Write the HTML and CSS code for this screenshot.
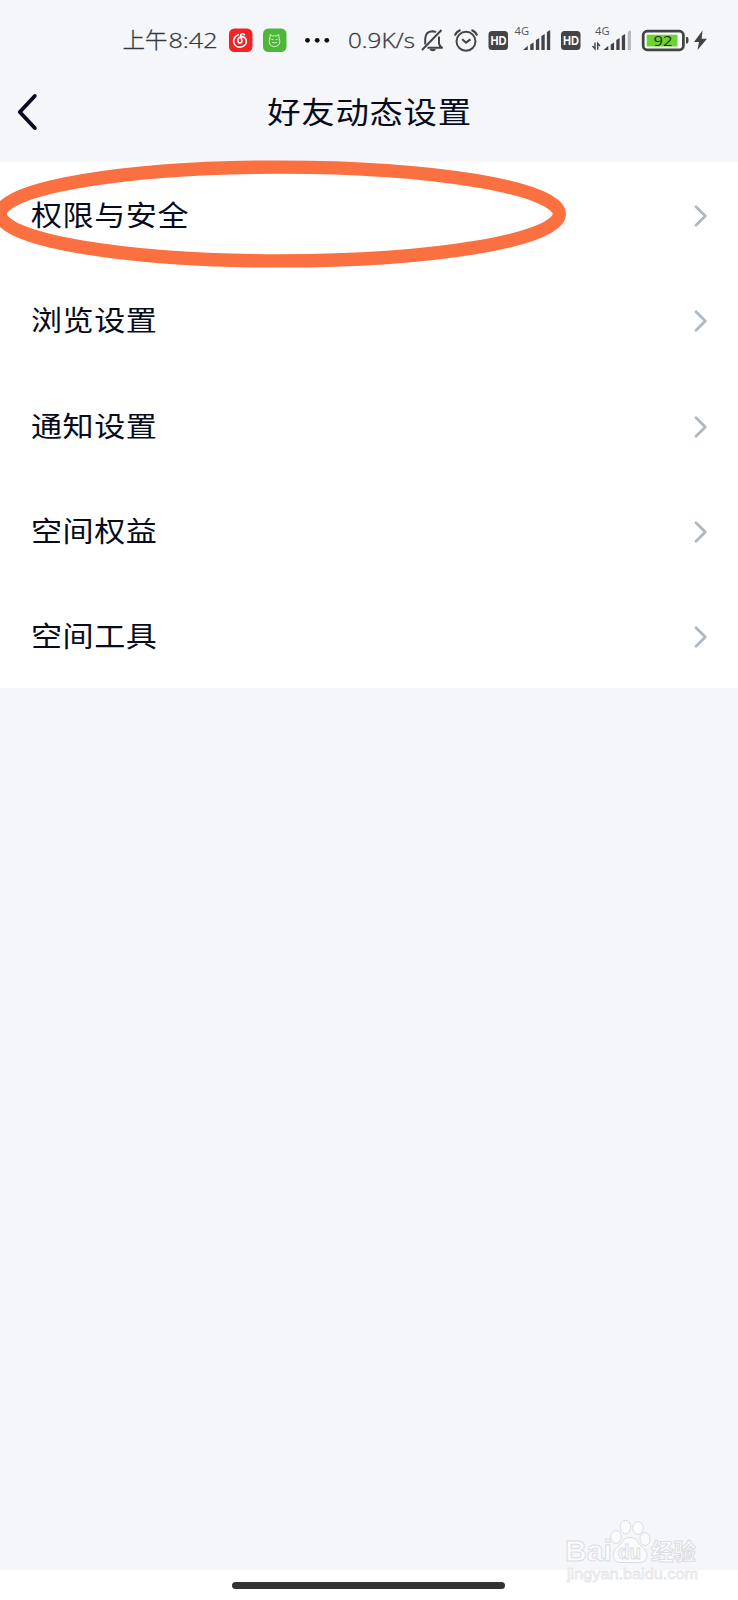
FILE: index.html
```html
<!DOCTYPE html>
<html lang="zh-CN">
<head>
<meta charset="utf-8">
<title>好友动态设置</title>
<link rel="stylesheet" href="styles.css">
</head>
<body>
<div class="screen">
  <div class="status">
    <svg class="tile" width="103" height="72" viewBox="120 0 103 72"><text class="clock" x="122.500" y="47.500" textLength="45" lengthAdjust="spacingAndGlyphs">上午</text><text class="digits" x="168.500" y="47.500" textLength="49" lengthAdjust="spacingAndGlyphs">8:42</text></svg>
    <svg class="tile" width="35" height="72" viewBox="223 0 35 72">
      <rect x="229" y="28.500" width="23.500" height="23.500" rx="5.500" fill="#f32223"/>
      <path d="M238.300 34.700C234.700 36 233 39.500 233.800 42.600C234.700 46 238 47.700 241.300 47C244.700 46.200 246.900 43.300 246.200 40.100C245.600 37.600 243.200 36.200 240.900 36.900C238.500 37.500 237.400 39.500 238 41.400C238.600 43.500 241.700 43.600 242 41.200C242 39.500 240.300 36.500 240.800 34.800C241.300 33.500 243 33.400 244.300 34.600" fill="none" stroke="#fff" stroke-width="1.700" stroke-linecap="round"/>
    </svg>
    <svg class="tile" width="37" height="72" viewBox="258 0 37 72">
      <rect x="263" y="28.500" width="23.500" height="23.500" rx="5.500" fill="#4db737"/>
      <g fill="none" stroke="#dff8d8" stroke-width="0.900" stroke-linecap="round" stroke-linejoin="round"><path d="M269.800 38.500L270.300 34.300L272.300 36Q274.500 35.500 276.700 36L278.700 34.300L279.200 38.500Q280.600 41.500 279.300 44Q278 46.700 274.500 46.700Q271 46.700 269.700 44Q268.400 41.500 269.800 38.500Z"/><path d="M271.800 39.500H273M276 39.500H277.200M272.300 42.500Q274.500 43.600 276.700 42.500"/></g>
    </svg>
    <svg class="tile" width="45" height="72" viewBox="295 0 45 72"><g fill="#0c0c10"><circle cx="307.500" cy="40.300" r="2.400"/><circle cx="317.200" cy="40.300" r="2.400"/><circle cx="326.800" cy="40.300" r="2.400"/></g></svg>
    <svg class="tile" width="78" height="72" viewBox="340 0 78 72"><text class="digits" x="348" y="47.500" textLength="67" lengthAdjust="spacingAndGlyphs">0.9K/s</text></svg>
    <svg class="tile" width="31" height="72" viewBox="418 0 31 72">
      <g fill="none" stroke="#444447" stroke-width="2" stroke-linejoin="round"><path d="M422 50L441.500 30"/><path d="M425.200 44.500V39Q425.500 31.500 432.200 31.200Q434.500 31.200 436 32.300"/><path d="M439 36.500V43.500Q439.500 46.500 442 47.700H427.500"/></g><path d="M429.500 49H436Q435.300 51.300 432.700 51.300Q430 51.300 429.500 49Z" fill="#444447"/>
    </svg>
    <svg class="tile" width="34" height="72" viewBox="449 0 34 72"><g fill="none" stroke="#444447" stroke-width="2"><circle cx="466" cy="41.300" r="9.500"/><path d="M454.800 35.500Q456.500 31.500 460.500 30M471.500 30Q475.500 31.500 477.200 35.500"/><path d="M462.200 39.300L466 42.700L470.500 39.300" stroke-width="2.200"/></g></svg>
    <svg class="tile" width="29" height="72" viewBox="483 0 29 72"><rect x="488.500" y="31" width="19.500" height="19" rx="3.500" fill="#444447"/><text class="hd" x="490.500" y="45" textLength="16" lengthAdjust="spacingAndGlyphs">HD</text></svg>
    <svg class="tile" width="43" height="72" viewBox="512 0 43 72"><text class="net" x="514.500" y="35.300" textLength="14.500" lengthAdjust="spacingAndGlyphs">4G</text><path d="M523 50L527.800 45.800V50ZM530.200 50V44.500L533.600 42.500V50ZM535.900 50V40L539.200 38V50ZM541.400 50V36L544.700 34V50ZM546.900 50V32L550.200 30V50Z" fill="#444447"/></svg>
    <svg class="tile" width="30" height="72" viewBox="555 0 30 72"><rect x="561" y="31" width="19.500" height="19" rx="3.500" fill="#444447"/><text class="hd" x="563" y="45" textLength="16" lengthAdjust="spacingAndGlyphs">HD</text></svg>
    <svg class="tile" width="52" height="72" viewBox="585 0 52 72"><text class="net" x="595" y="35.300" textLength="14.500" lengthAdjust="spacingAndGlyphs">4G</text><path d="M592.500 46L595 48.800V42.500M597.700 49.800V43.300L600 46" fill="none" stroke="#444447" stroke-width="1.400"/><path d="M603.500 50L608.300 45.800V50ZM610.700 50V44.500L614.100 42.500V50ZM616.300 50V40L619.600 38V50ZM621.800 50V36L625.100 34V50Z" fill="#444447"/><path d="M627.700 50V32L631 30V50Z" fill="#b9babf"/></svg>
    <svg class="tile" width="53" height="72" viewBox="637 0 53 72"><rect x="643.200" y="31.200" width="40.200" height="18.600" rx="4" fill="#fff" stroke="#444447" stroke-width="2.800"/><rect x="646.700" y="34.700" width="30.800" height="11.800" fill="#6bd333"/><path d="M686 37V43.500H687Q688.500 43.500 688.500 40.200Q688.500 37 687 37Z" fill="#444447"/><text class="charge" x="653.500" y="45.600" textLength="19" lengthAdjust="spacingAndGlyphs">92</text></svg>
    <svg class="tile" width="24" height="72" viewBox="690 0 24 72"><path d="M702.500 30.500L694 42H699L697.500 50L707 38.800H701.600Z" fill="#444447"/></svg>
  </div>

  <header class="nav">
    <svg class="back" width="24" height="40" viewBox="0 0 24 40"><path d="M18.800 4L3.800 20L18.800 36" fill="none" stroke="#070b1c" stroke-width="3.900" stroke-linecap="round" stroke-linejoin="round"/></svg>
    <h1 class="title">好友动态设置</h1>
  </header>

  <main class="list">
    <a class="row"><span class="label">权限与安全</span><svg class="go" width="14" height="24" viewBox="0 0 14 24"><path d="M2 2.700L11.300 12L2 21.300"/></svg></a>
    <a class="row"><span class="label">浏览设置</span><svg class="go" width="14" height="24" viewBox="0 0 14 24"><path d="M2 2.700L11.300 12L2 21.300"/></svg></a>
    <a class="row"><span class="label">通知设置</span><svg class="go" width="14" height="24" viewBox="0 0 14 24"><path d="M2 2.700L11.300 12L2 21.300"/></svg></a>
    <a class="row"><span class="label">空间权益</span><svg class="go" width="14" height="24" viewBox="0 0 14 24"><path d="M2 2.700L11.300 12L2 21.300"/></svg></a>
    <a class="row"><span class="label">空间工具</span><svg class="go" width="14" height="24" viewBox="0 0 14 24"><path d="M2 2.700L11.300 12L2 21.300"/></svg></a>
  </main>

  <footer class="gesture"><div class="pill"></div></footer>

  <svg class="ring" width="580" height="120" viewBox="0 154 580 120"><ellipse cx="279.800" cy="214" rx="279.600" ry="46.900" fill="none" stroke="#fb7041" stroke-width="13.400"/></svg>

  <svg class="mark" width="150" height="75" viewBox="560 1515 150 75">
    <g class="outline">
      <text class="brand" x="565" y="1561" textLength="47" lengthAdjust="spacingAndGlyphs">Bai</text>
      <ellipse cx="616" cy="1537" rx="5.300" ry="6.500"/><ellipse cx="625.500" cy="1527" rx="5.300" ry="6.800"/><ellipse cx="638" cy="1528" rx="5.300" ry="6.500"/><ellipse cx="645" cy="1539" rx="5" ry="6.500"/>
      <path d="M630 1537.500Q636 1537.500 638.500 1543C641 1547 647 1549 647 1556Q646.500 1562.500 639 1562.500H620Q613.500 1562 613.500 1555.500C613.500 1548 619 1547 621.500 1543Q624 1537.500 630 1537.500Z"/>
      <text class="du" x="618" y="1558.500" textLength="23" lengthAdjust="spacingAndGlyphs">du</text>
      <text class="cn" x="651" y="1560" textLength="45" lengthAdjust="spacingAndGlyphs">经验</text>
      <text class="url" x="567" y="1579" textLength="131" lengthAdjust="spacingAndGlyphs">jingyan.baidu.com</text>
    </g>
  </svg>
</div>
</body>
</html>
```
FILE: styles.css
```css
* { box-sizing: border-box; }

body {
  margin: 0;
  background: #f4f6fa;
  font-family: Roboto, "Noto Sans CJK SC", sans-serif;
}

.screen {
  position: relative;
  display: flex;
  flex-direction: column;
  width: 738px;
  height: 1600px;
  overflow: hidden;
  background: #f4f6fa;
}

.status {
  display: flex;
  height: 72px;
  padding-left: 120px;
}

.tile { flex: none; display: block; }

.clock {
  font: 300 21.500px "Noto Sans CJK SC", sans-serif;
  fill: #38383c;
  stroke: #38383c;
  stroke-width: 0.300;
}

.digits {
  font: 300 21px "Open Sans", "Noto Sans", sans-serif;
  fill: #38383c;
  stroke: #38383c;
  stroke-width: 0.300;
}

.hd { font: 700 12.500px "Liberation Sans", sans-serif; fill: #fff; }
.net { font: 400 11px "Open Sans", sans-serif; fill: #55555a; }
.charge { font: 400 14px "Open Sans", sans-serif; fill: #27301f; }

.nav {
  display: flex;
  align-items: center;
  height: 90px;
  padding: 0 17px 10px 16px;
}

.back { flex: none; }

.title {
  flex: 1;
  margin: -4px 25px 0 0;
  padding-left: 3px;
  text-align: center;
  font: 400 33.400px/50px "Noto Sans CJK SC", sans-serif;
  letter-spacing: 0.700px;
  color: #070b1c;
  transform: scaleY(0.9);
}

.list { background: #fff; }

.row {
  display: flex;
  align-items: center;
  justify-content: space-between;
  height: 105.300px;
  padding: 3px 30px 0 31px;
}

.label {
  margin-top: -4px;
  font: 400 31.100px/46px "Noto Sans CJK SC", sans-serif;
  letter-spacing: 0.500px;
  color: #070b1c;
  transform: scaleY(0.91);
}

.go path {
  fill: none;
  stroke: #adb8c2;
  stroke-width: 2.700;
  stroke-linecap: round;
  stroke-linejoin: round;
}

.gesture {
  display: flex;
  justify-content: center;
  height: 30px;
  margin-top: auto;
  padding: 12px 3px 0 0;
  background: #fff;
}

.pill {
  width: 273px;
  height: 7px;
  margin-left: 1px;
  border-radius: 4px;
  background: #333;
}

.ring { position: absolute; left: 0; top: 154px; }
.mark { position: absolute; left: 560px; top: 1515px; }

.outline {
  fill: #fafbfd;
  stroke: #dcdde2;
  stroke-width: 1;
}

.brand { font: 700 30px "Liberation Sans", sans-serif; }
.du { font: 700 20px "Liberation Sans", sans-serif; }
.cn { font: 700 23px "Noto Sans CJK SC", sans-serif; }
.url { font: 400 15.500px "Liberation Sans", sans-serif; stroke: #e6e6ea; stroke-width: 0.800; }
```
